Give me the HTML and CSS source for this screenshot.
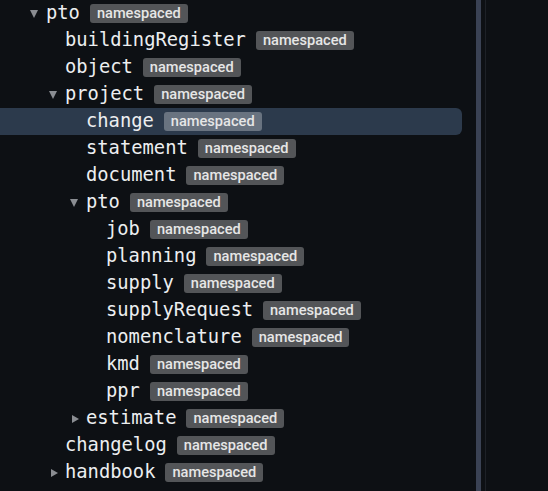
FILE: index.html
```html
<!DOCTYPE html>
<html>
<head>
<meta charset="utf-8">
<link rel="stylesheet" href="styles.css">
</head>
<body>
<div class="layout">
  <div class="tree">
    <div class="row l1"><span class="tw open"></span><span class="name">pto</span><span class="badge">namespaced</span></div>
    <div class="row l2"><span class="tw"></span><span class="name">buildingRegister</span><span class="badge">namespaced</span></div>
    <div class="row l2"><span class="tw"></span><span class="name">object</span><span class="badge">namespaced</span></div>
    <div class="row l2"><span class="tw open"></span><span class="name">project</span><span class="badge">namespaced</span></div>
    <div class="row l3 selected"><span class="tw"></span><span class="name">change</span><span class="badge">namespaced</span></div>
    <div class="row l3"><span class="tw"></span><span class="name">statement</span><span class="badge">namespaced</span></div>
    <div class="row l3"><span class="tw"></span><span class="name">document</span><span class="badge">namespaced</span></div>
    <div class="row l3"><span class="tw open"></span><span class="name">pto</span><span class="badge">namespaced</span></div>
    <div class="row l4"><span class="tw"></span><span class="name">job</span><span class="badge">namespaced</span></div>
    <div class="row l4"><span class="tw"></span><span class="name">planning</span><span class="badge">namespaced</span></div>
    <div class="row l4"><span class="tw"></span><span class="name">supply</span><span class="badge">namespaced</span></div>
    <div class="row l4"><span class="tw"></span><span class="name">supplyRequest</span><span class="badge">namespaced</span></div>
    <div class="row l4"><span class="tw"></span><span class="name">nomenclature</span><span class="badge">namespaced</span></div>
    <div class="row l4"><span class="tw"></span><span class="name">kmd</span><span class="badge">namespaced</span></div>
    <div class="row l4"><span class="tw"></span><span class="name">ppr</span><span class="badge">namespaced</span></div>
    <div class="row l3"><span class="tw closed"></span><span class="name">estimate</span><span class="badge">namespaced</span></div>
    <div class="row l2"><span class="tw"></span><span class="name">changelog</span><span class="badge">namespaced</span></div>
    <div class="row l2"><span class="tw closed"></span><span class="name">handbook</span><span class="badge">namespaced</span></div>
  </div>
  <div class="splitter"></div>
  <div class="edge"></div>
  <div class="side"></div>
</div>
</body>
</html>
```
FILE: styles.css
```css
html, body {
  margin: 0;
  padding: 0;
  background: #0d1014;
  height: 100%;
  overflow: hidden;
}
.layout {
  display: flex;
  height: 491px;
}
.tree {
  width: 462px;
  flex: none;
  padding-right: 14px;
}
.row {
  height: 27px;
  display: flex;
  align-items: center;
  border-radius: 0 6px 6px 0;
}
.row.selected {
  background: #2c3a4c;
}
.l1 { padding-left: 28px; }
.l2 { padding-left: 47px; }
.l3 { padding-left: 68px; }
.l4 { padding-left: 88px; }
.tw {
  width: 18px;
  flex: none;
  display: flex;
  align-items: center;
  height: 100%;
}
.tw.open::before {
  content: "";
  display: block;
  margin-left: 2px;
  border-left: 4.5px solid transparent;
  border-right: 4.5px solid transparent;
  border-top: 8px solid #8a8d92;
}
.tw.closed::before {
  content: "";
  display: block;
  margin-left: 4px;
  border-top: 4.5px solid transparent;
  border-bottom: 4.5px solid transparent;
  border-left: 7px solid #8a8d92;
}
.name {
  font-family: "DejaVu Sans Mono", monospace;
  font-size: 18.8px;
  color: #eceef0;
  line-height: 27px;
  margin-top: -2px;
}
.badge {
  margin-left: 10px;
  font-family: Roboto, "Noto Sans", sans-serif;
  font-size: 14.6px;
  font-weight: 500;
  color: #e6e6e6;
  background: rgba(255, 255, 255, 0.29);
  border-radius: 3px;
  padding: 0 7px;
  height: 19px;
  line-height: 19px;
}
.splitter {
  width: 5px;
  flex: none;
  background: #3a4254;
}
.edge {
  width: 1px;
  margin-left: 4px;
  flex: none;
  background: #1d2127;
}
.side {
  flex: 1;
}
```
